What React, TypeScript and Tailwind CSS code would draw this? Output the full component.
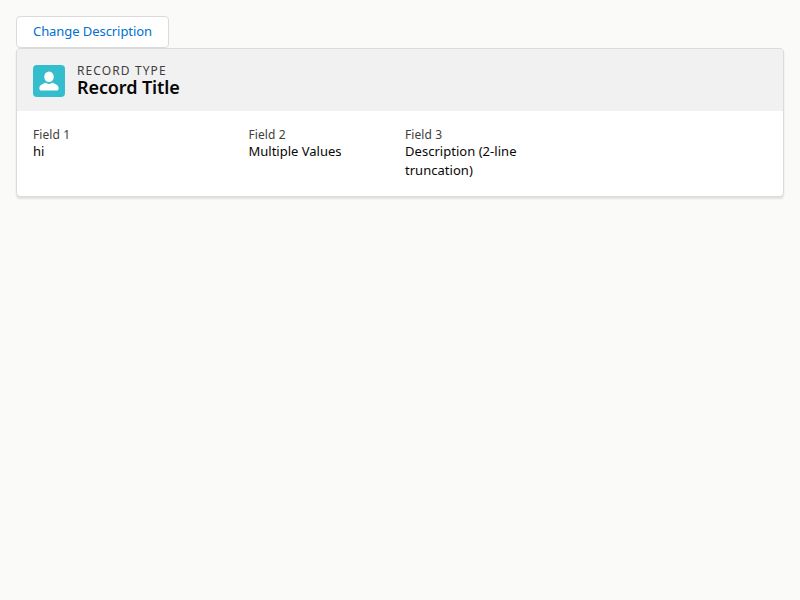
export default function App() {
  return (
    <div className="min-h-screen bg-[#fafaf9] p-4 font-['Noto_Sans',sans-serif] text-[13px] leading-[19px] text-[#080707]">
      <button className="block h-8 w-[153px] whitespace-nowrap rounded border border-[#dddbda] bg-white pb-0.5 pl-4 text-left leading-[19px] tracking-[-0.07px] text-[#0070d2]">
        Change Description
      </button>
      <div className="h-[149px] overflow-hidden rounded border border-[#dddbda] bg-white shadow-[0_2px_2px_0_rgba(0,0,0,0.1)]">
        <div className="flex h-[62px] bg-[#f1f1f1] px-4 pt-4">
          <svg className="h-8 w-8 rounded bg-[#34becd]" viewBox="0 0 100 100" fill="#fff">
            <path d="M80 71.2V74c0 3.3-2.7 6-6 6H26c-3.3 0-6-2.7-6-6v-2.8c0-7.3 8.5-11.7 16.5-15.2.3-.1.5-.2.8-.4.6-.3 1.3-.3 1.9.1C42.4 57.8 46.1 59 50 59s7.6-1.2 10.8-3.2c.6-.4 1.3-.4 1.9-.1.3.1.5.2.8.4 8 3.4 16.5 7.8 16.5 15.1z" />
            <ellipse cx="50" cy="36.5" rx="14.9" ry="16.5" />
          </svg>
          <div className="ml-3">
            <div className="text-[12px] leading-3 tracking-[1.1px] text-[#3e3e3c]">RECORD TYPE</div>
            <h1 className="text-[18px] font-semibold leading-5 tracking-[-0.1px]">Record Title</h1>
          </div>
        </div>
        <div className="flex px-4 pt-[17px]">
          <div className="w-[215.5px]">
            <div className="text-[12px] leading-[14px] tracking-[0.08px] text-[#3e3e3c]">Field 1</div>
            <div>hi</div>
          </div>
          <div className="w-[156.5px]">
            <div className="text-[12px] leading-[14px] tracking-[0.08px] text-[#3e3e3c]">Field 2</div>
            <div>Multiple Values</div>
          </div>
          <div className="w-[125px]">
            <div className="text-[12px] leading-[14px] tracking-[0.08px] text-[#3e3e3c]">Field 3</div>
            <div className="tracking-[0.03px]">Description (2-line truncation)</div>
          </div>
        </div>
      </div>
    </div>
  );
}
